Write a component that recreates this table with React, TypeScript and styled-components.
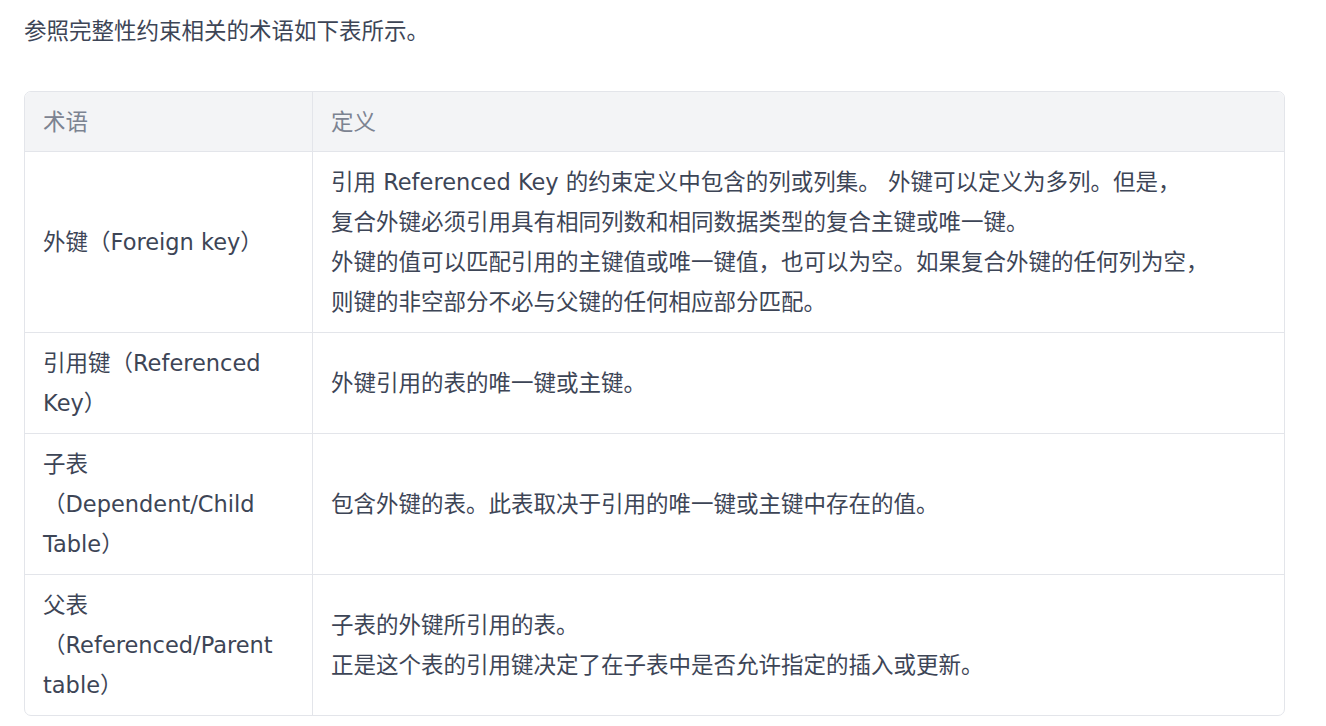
import React from "react";
import styled, {createGlobalStyle} from "styled-components";

const GlobalStyle = createGlobalStyle`
  body {
    margin: 0;
    background: #ffffff;
    font-family: "DejaVu Sans", "Noto Sans CJK SC", sans-serif;
    color: #3d4556;
  }
`;

const rows = [
  {
    term: "外键（Foreign key）",
    def: [
      "引用 Referenced Key 的约束定义中包含的列或列集。 外键可以定义为多列。但是，",
      "复合外键必须引用具有相同列数和相同数据类型的复合主键或唯一键。",
      "外键的值可以匹配引用的主键值或唯一键值，也可以为空。如果复合外键的任何列为空，",
      "则键的非空部分不必与父键的任何相应部分匹配。",
    ],
  },
  {
    term: "引用键（Referenced Key）",
    def: ["外键引用的表的唯一键或主键。"],
  },
  {
    term: "子表（Dependent/Child Table）",
    def: ["包含外键的表。此表取决于引用的唯一键或主键中存在的值。"],
  },
  {
    term: "父表（Referenced/Parent table）",
    def: [
      "子表的外键所引用的表。",
      "正是这个表的引用键决定了在子表中是否允许指定的插入或更新。",
    ],
  },
];

function App() {
  return (
    <Page>
      <GlobalStyle />
      <Intro>参照完整性约束相关的术语如下表所示。</Intro>
      <TableWrap>
        <Table>
          <thead>
            <tr>
              <Th style={{width: 251}}>术语</Th>
              <Th>定义</Th>
            </tr>
          </thead>
          <tbody>
            {rows.map((row) => (
              <tr key={row.term}>
                <Td>{row.term}</Td>
                <Td>
                  {row.def.map((line, i) => (
                    <React.Fragment key={i}>
                      {i > 0 && <br />}
                      {line}
                    </React.Fragment>
                  ))}
                </Td>
              </tr>
            ))}
          </tbody>
        </Table>
      </TableWrap>
    </Page>
  );
}

export default App;

const Page = styled.div`
  padding: 11px 41px 0 24px;
`;

const Intro = styled.p`
  margin: 0 0 40px;
  font-size: 22.5px;
  line-height: 40px;
`;

const TableWrap = styled.div`
  border: 1px solid #e3e5ea;
  border-radius: 7px;
  overflow: hidden;
`;

const Table = styled.table`
  width: 100%;
  border-collapse: collapse;
  table-layout: fixed;
  font-size: 22.5px;
  line-height: 40px;
`;

const Th = styled.th`
  background: #f3f4f6;
  color: #7c8391;
  font-weight: 400;
  text-align: left;
  padding: 10px 18px 9px;
  border-bottom: 1px solid #e3e5ea;
  &:first-child {
    border-right: 1px solid #e3e5ea;
  }
`;

const Td = styled.td`
  padding: 10px 18px;
  vertical-align: middle;
  border-top: 1px solid #e3e5ea;
  tr:first-child > & {
    border-top: none;
  }
  &:first-child {
    border-right: 1px solid #e3e5ea;
  }
`;
